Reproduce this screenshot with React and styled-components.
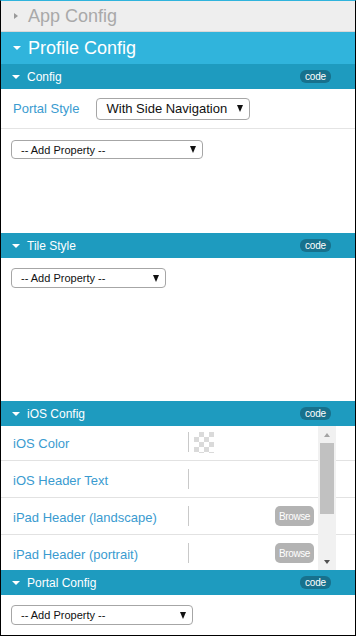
import React from 'react';
import styled, { createGlobalStyle } from 'styled-components';

const GlobalStyle = createGlobalStyle`
  html, body {
    margin: 0;
    padding: 0;
    background: #fff;
  }
  * {
    box-sizing: border-box;
  }
`;

// rows of the iOS config grid
const iosRows = [
  { label: 'iOS Color', kind: 'color' },
  { label: 'iOS Header Text', kind: 'text' },
  { label: 'iPad Header (landscape)', kind: 'file' },
  { label: 'iPad Header (portrait)', kind: 'file' },
];

const Frame = styled.div`
  width: 356px;
  height: 636px;
  border-top: 1px solid #2fb3dc;
  border-left: 1px solid #000;
  border-right: 1px solid #000;
  border-bottom: 1px solid #000;
  font-family: 'Liberation Sans', Arial, sans-serif;
  display: flex;
  flex-direction: column;
  overflow: hidden;
`;

const TopBar = styled.div`
  height: ${(p) => p.h}px;
  flex: none;
  display: flex;
  align-items: center;
  padding-left: ${(p) => (p.open ? 12 : 13)}px;
  gap: ${(p) => (p.open ? 7 : 10)}px;
  background: ${(p) => (p.open ? '#30b4dc' : '#eeeeee')};
  color: ${(p) => (p.open ? '#fff' : '#a9a9a9')};
  font-size: 18px;
  border-bottom: ${(p) => (p.open ? 'none' : '1px solid #d8d8d8')};
`;

const CaretRight = styled.span`
  width: 0;
  height: 0;
  border-top: 3.5px solid transparent;
  border-bottom: 3.5px solid transparent;
  border-left: 4px solid #9a9a9a;
`;

const CaretDown = styled.span`
  width: 0;
  height: 0;
  border-left: 4px solid transparent;
  border-right: 4px solid transparent;
  border-top: 4px solid ${(p) => p.color || '#fff'};
`;

const SubHeader = styled.div`
  height: 25px;
  flex: none;
  display: flex;
  align-items: center;
  padding: 0 24px 0 11px;
  gap: 7px;
  background: #1e9bbf;
  color: #fff;
  font-size: 12px;
`;

const SubTitle = styled.span`
  flex: 1;
`;

const CodeBadge = styled.span`
  width: 31px;
  height: 13px;
  border-radius: 6px;
  background: #17718d;
  color: #fff;
  font-size: 10px;
  display: flex;
  align-items: center;
  justify-content: center;
  letter-spacing: -0.2px;
`;

const Body = styled.div`
  height: ${(p) => p.h}px;
  flex: none;
  background: #fff;
  position: relative;
  overflow: hidden;
`;

const FieldRow = styled.div`
  height: 40px;
  display: flex;
  align-items: center;
  gap: 17px;
  padding-left: 12px;
  border-bottom: 1px solid #e4e4e4;
`;

const Label = styled.span`
  color: #3a9bd0;
  font-size: 13px;
  white-space: nowrap;
`;

const SelectBox = styled.div`
  width: ${(p) => p.w}px;
  height: ${(p) => p.h || 19}px;
  margin: ${(p) => p.m || '0'};
  border: 1px solid #a6a6a6;
  border-radius: 4px;
  background: #fff;
  display: flex;
  align-items: center;
  justify-content: space-between;
  padding: 0 6px 0 ${(p) => p.pl || 9}px;
  font-size: ${(p) => p.fs || 11}px;
  color: #111;
`;

const SelectArrow = styled.span`
  width: 0;
  height: 0;
  border-left: 3.5px solid transparent;
  border-right: 3.5px solid transparent;
  border-top: 7px solid #111;
`;

const RowList = styled.div`
  margin-top: -2px;
`;

const GridRow = styled.div`
  height: 37px;
  display: flex;
  align-items: center;
  border-bottom: 1px solid #e2e2e2;
`;

const GridLabel = styled(Label)`
  width: 187px;
  padding: 3px 0 0 12px;
`;

const GridValue = styled.div`
  flex: 1;
  height: 20px;
  display: flex;
  align-items: center;
  justify-content: space-between;
  border-left: 1px solid #c9c9c9;
  padding: 0 41px 0 5px;
`;

const Checker = styled.div`
  width: 20px;
  height: 21px;
  background: repeating-conic-gradient(#dadada 0 25%, #fff 0 50%) 0 0 / 10px 10px;
`;

const BrowseButton = styled.span`
  margin-left: auto;
  width: 39px;
  height: 20px;
  border-radius: 5px;
  background: #b3b3b3;
  color: #fff;
  font-size: 10px;
  letter-spacing: -0.4px;
  display: flex;
  align-items: center;
  justify-content: center;
`;

const ScrollTrack = styled.div`
  position: absolute;
  top: 0;
  right: 19px;
  width: 18px;
  height: 144px;
  background: #f1f1f1;
  display: flex;
  flex-direction: column;
  align-items: center;
`;

const ScrollArrow = styled.span`
  height: 17px;
  flex: none;
  display: flex;
  align-items: center;
  justify-content: center;
  &::before {
    content: '';
    width: 0;
    height: 0;
    border-left: 3.5px solid transparent;
    border-right: 3.5px solid transparent;
    ${(p) =>
      p.down
        ? 'border-top: 4px solid #505050;'
        : 'border-bottom: 4px solid #a3a3a3;'}
  }
`;

const ScrollThumb = styled.div`
  width: 14px;
  height: 71px;
  background: #c1c1c1;
`;

const ScrollSpace = styled.div`
  flex: 1;
`;

const Section = ({ title }) => (
  <SubHeader>
    <CaretDown />
    <SubTitle>{title}</SubTitle>
    <CodeBadge>code</CodeBadge>
  </SubHeader>
);

const App = () => (
  <>
    <GlobalStyle />
    <Frame>
      <TopBar h={31}>
        <CaretRight />
        <span>App Config</span>
      </TopBar>
      <TopBar h={32} open>
        <CaretDown />
        <span>Profile Config</span>
      </TopBar>

      <Section title='Config' />
      <Body h={144}>
        <FieldRow>
          <Label>Portal Style</Label>
          <SelectBox w={154} h={22} fs={13} pl={9}>
            With Side Navigation
            <SelectArrow />
          </SelectBox>
        </FieldRow>
        <SelectBox w={192} m='11px 0 0 10px'>
          -- Add Property --
          <SelectArrow />
        </SelectBox>
      </Body>

      <Section title='Tile Style' />
      <Body h={143}>
        <SelectBox w={155} h={20} m='10px 0 0 10px'>
          -- Add Property --
          <SelectArrow />
        </SelectBox>
      </Body>

      <Section title='iOS Config' />
      <Body h={144}>
        <RowList>
          {iosRows.map((row) => (
            <GridRow key={row.label}>
              <GridLabel>{row.label}</GridLabel>
              <GridValue>
                {row.kind === 'color' && <Checker />}
                {row.kind === 'file' && <BrowseButton>Browse</BrowseButton>}
              </GridValue>
            </GridRow>
          ))}
        </RowList>
        <ScrollTrack>
          <ScrollArrow />
          <ScrollThumb />
          <ScrollSpace />
          <ScrollArrow down />
        </ScrollTrack>
      </Body>

      <Section title='Portal Config' />
      <Body h={40}>
        <SelectBox w={182} h={20} m='10px 0 0 10px'>
          -- Add Property --
          <SelectArrow />
        </SelectBox>
      </Body>
    </Frame>
  </>
);

export default App;
